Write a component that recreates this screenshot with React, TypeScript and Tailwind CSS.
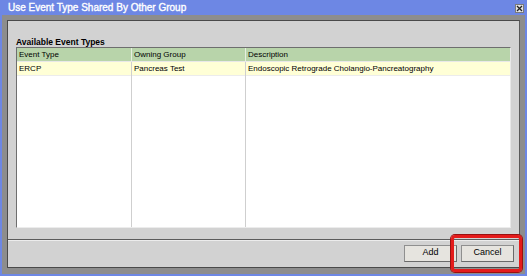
import React from "react";

type Row = { type: string; group: string; description: string };

const rows: Row[] = [
  {
    type: "ERCP",
    group: "Pancreas Test",
    description: "Endoscopic Retrograde Cholangio-Pancreatography",
  },
];

function CloseBox() {
  return (
    <div className="flex h-[9px] w-[9px] items-center justify-center border border-[#7a7a7a] bg-[#e4e4e4]">
      <svg viewBox="0 0 7 7" className="h-[7px] w-[7px]" aria-hidden>
        <path d="M1 1 6 6M6 1 1 6" stroke="#222" strokeWidth="1.3" />
      </svg>
    </div>
  );
}

function Button({ label }: { label: string }) {
  return (
    <button className="flex h-[17px] w-[53px] items-center justify-center border border-[#8f8f8f] border-r-[#6a6a6a] border-b-[#6a6a6a] bg-[#e6e4df] text-[9px] text-black">
      {label}
    </button>
  );
}

export default function App() {
  return (
    <div
      className="relative flex h-[276px] w-[527px] flex-col overflow-hidden bg-[#6d87e4] text-black"
      style={{ fontFamily: '"Liberation Sans", Arial, sans-serif' }}
    >
      <div className="flex h-[15px] shrink-0 items-center justify-between pl-[8px] pr-[3px]">
        <span className="text-[10px] font-normal leading-none text-white [-webkit-text-stroke:0.35px_white]">
          Use Event Type Shared By Other Group
        </span>
        <div className="mt-[1px]">
          <CloseBox />
        </div>
      </div>

      <div className="mx-[2px] mb-[2px] flex flex-1 flex-col bg-[#8d8d8d] px-[5px] pt-[5px] pb-[6px]">
        <div className="flex flex-1 flex-col border border-[#4a4a4a] border-r-[#5a5a5a] bg-[#d2d2d2]">
          <div className="flex flex-col px-[8px] pt-[16px] pb-[11px]">
            <div className="text-[8.5px] font-bold leading-[10px]">Available Event Types</div>
            <div className="flex h-[181px] flex-col border-t border-l border-[#6e6e6e] border-r border-r-[#e8e8e8] border-b border-b-[#ececec] bg-white">
              <div className="grid h-[13px] grid-cols-[115px_114px_1fr] bg-[#b8d4aa] text-[8px] leading-[13px]">
                <div className="border-r border-[#e6eee0] pl-[2px]">Event Type</div>
                <div className="border-r border-[#e6eee0] pl-[2px]">Owning Group</div>
                <div className="pl-[2px]">Description</div>
              </div>
              <div className="grid flex-1 grid-cols-[115px_114px_1fr] border-t border-[#e8e8e8] text-[8px]">
                {[0, 1, 2].map((c) => (
                  <div
                    key={c}
                    className={c < 2 ? "flex flex-col border-r border-[#cfcfcf]" : "flex flex-col"}
                  >
                    {rows.map((r) => (
                      <div
                        key={r.type}
                        className="h-[14px] border-b border-[#ececec] bg-[#ffffd6] pl-[2px] leading-[14px]"
                      >
                        {c === 0 ? r.type : c === 1 ? r.group : r.description}
                      </div>
                    ))}
                  </div>
                ))}
              </div>
            </div>
          </div>
          <div className="border-t border-[#5c5c5c]" />
          <div className="border-t border-[#ececec]" />
          <div className="flex flex-1 items-center justify-end gap-[4px] pr-[5px] pb-[2px]">
            <Button label="Add" />
            <Button label="Cancel" />
          </div>
        </div>
      </div>

      <div className="pointer-events-none absolute left-[451px] top-[235px] h-[37px] w-[71px] rounded-[4px] border-[3px] border-[#e41b1b] shadow-[0_0_0_1px_#9a1010]" />
    </div>
  );
}
